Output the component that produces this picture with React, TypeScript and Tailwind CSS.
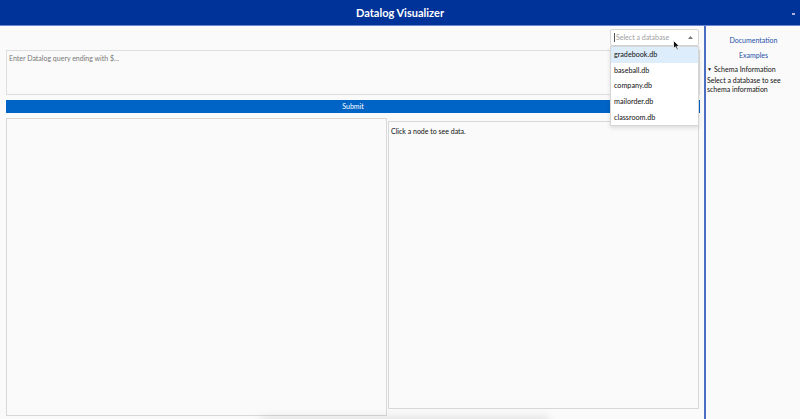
export default function App() {
  const dbs = ['gradebook.db', 'baseball.db', 'company.db', 'mailorder.db', 'classroom.db']
  return (
    <div className="relative w-[800px] h-[419px] overflow-hidden bg-[#fafafa] flex flex-col font-['Lato',sans-serif] text-black">
      <header className="relative h-[26px] shrink-0 bg-[#003399] border-b border-[#6d86d4] flex items-center justify-center">
        <h1 className="text-white font-bold text-[11px] leading-none">Datalog Visualizer</h1>
        <span className="absolute right-[5px] top-[13px] w-[3px] h-[2px] bg-[#aab4d8]" />
      </header>

      <div className="flex flex-1 min-h-0">
        <div className="w-[704px] shrink-0 flex flex-col pl-[6px] pr-[4px] pt-[3px]">
          <div className="flex justify-end pr-[1px]">
            <div className="relative w-[89px] h-[17px] border border-[#d6d6d6] bg-white rounded-[2px] flex items-center pl-[3px] pr-[5px]">
              <span className="w-px h-[9px] bg-[#555] mr-[1px]" />
              <span className="text-[7px] text-[#a0a0a0] leading-none flex-1">Select a database</span>
              <svg width="5" height="3" viewBox="0 0 5 3" className="fill-[#777]">
                <path d="M0 3 L2.5 0 L5 3 Z" />
              </svg>
              <svg width="8" height="11" viewBox="0 0 8 11" className="absolute left-[62px] top-[10px] z-20">
                <path d="M0.5 0.5 L0.5 8.5 L2.5 6.8 L4 10 L5.3 9.4 L3.9 6.3 L6.5 6.3 Z" fill="#111" stroke="#fff" strokeWidth="0.8" />
              </svg>
              <ul className="absolute left-[-1px] top-[16px] w-[89px] z-10 bg-white border border-[#d6d6d6] shadow-[0_2px_4px_rgba(0,0,0,0.12)]">
                {dbs.map((d, i) => (
                  <li
                    key={d}
                    className={`h-[15.6px] flex items-center pl-[3px] text-[7.2px] leading-none text-[#111] ${i === 0 ? 'bg-[#deedfb]' : ''}`}
                  >
                    {d}
                  </li>
                ))}
              </ul>
            </div>
          </div>

          <textarea
            placeholder="Enter Datalog query ending with $..."
            className="mt-[4px] h-[45px] shrink-0 w-full resize-none border border-[#dedede] bg-[#fafafa] px-[2px] py-[2px] text-[7px] leading-[10px] placeholder:text-[#777] outline-none"
          />

          <button className="mt-[5px] h-[13px] shrink-0 w-full bg-[#0063c6] text-white text-[7px] leading-none">
            Submit
          </button>

          <div className="flex mt-[5px] flex-1 min-h-0 pb-[4px]">
            <div className="w-[381px] h-[298px] border border-[#d8d8d8] bg-[#fafafa]" />
            <div className="ml-px mt-[3px] w-[311px] h-[288px] border border-[#d8d8d8] bg-[#fafafa] px-[2px] pt-[4px]">
              <p className="text-[7px] leading-[10px] text-[#111]">Click a node to see data.</p>
            </div>
          </div>
        </div>

        <div className="w-[2px] shrink-0 bg-[#4a6fc2]" />

        <aside className="flex-1 pl-[1px] pt-[10px] text-[7px] leading-[9px] text-[#111]">
          <a className="block text-center text-[#1f4fa8]">Documentation</a>
          <a className="block text-center text-[#1f4fa8] mt-[6px]">Examples</a>
          <div className="mt-[5px]">
            <div className="flex items-center gap-[2px]">
              <span className="text-[5px]">▼</span>
              <span>Schema Information</span>
            </div>
            <p className="mt-[2px]">Select a database to see schema information</p>
          </div>
        </aside>
      </div>

      <div className="absolute left-[260px] bottom-[-8px] w-[290px] h-[10px] rounded-full bg-black/10 blur-[4px]" />
    </div>
  )
}
